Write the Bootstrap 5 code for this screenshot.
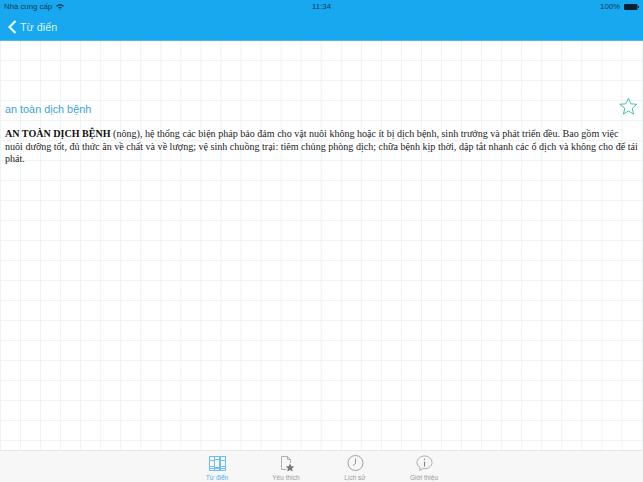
<!doctype html>
<html lang="vi">
<head>
<meta charset="utf-8">
<title>Từ điển</title>
<link href="https://cdn.jsdelivr.net/npm/bootstrap@5.3.0/dist/css/bootstrap.min.css" rel="stylesheet">
<style>
html,body{height:100%;margin:0}
body{width:643px;height:482px;overflow:hidden;font-family:"Liberation Sans",Arial,sans-serif;background:#fff}
.shell{height:482px}
.topbar{height:41px;background:#18a8ef;border-bottom:1px solid #4fb4e6;flex:none}
.statusrow{height:14px;padding:0 4px;font-size:7.8px;color:#0d3a55;line-height:14px}
.statusrow .clock{position:absolute;left:0;right:0;text-align:center;font-size:7.8px}
.navrow{height:26px;padding-left:8px;color:#d8f1fd;font-size:10.8px;gap:3px}
.sheet{flex:1 1 auto;background-color:#fff;
 background-image:linear-gradient(to right,#ebf3f4 1px,transparent 1px),linear-gradient(to bottom,#eff3f4 1px,transparent 1px);
 background-size:20.05px 20px;background-position:0 -1px;padding:0 5px;min-height:0}
.headrow{height:75px}
.term{color:#3aa3e0;font-size:10.85px;line-height:14px;margin:0;font-weight:400}
.defn{font-family:"Liberation Serif","Times New Roman",serif;font-size:10.07px;line-height:12.5px;color:#222;margin:12px 0 0;white-space:nowrap}
.defn b{color:#111}
.tabbar{height:32px;flex:none;background:#f7f7f8;border-top:1px solid #e8e8e8;gap:29px;padding-right:2px}
.tabitem{width:40px;color:#9a9a9a;font-size:6.5px;line-height:8px;padding-top:4px}
.tabitem.on{color:#4fb3e8}
.tabitem svg{display:block;height:18px;margin-bottom:1px}
</style>
</head>
<body>
<div class="shell d-flex flex-column">
  <header class="topbar position-relative">
    <div class="statusrow d-flex align-items-center justify-content-between">
      <span class="d-flex align-items-center gap-1">Nhà cung cấp
        <svg width="8" height="6" viewBox="0 0 8 6"><path d="M0 1.800C2.200-.3 5.800-.3 8 1.800L7 2.800C5.300 1.200 2.700 1.200 1 2.800ZM2 3.500C3.100 2.500 4.900 2.500 6 3.500L5 4.500C4.400 4 3.600 4 3 4.500ZM4 6L3.400 5.100C3.800 4.900 4.200 4.900 4.600 5.100Z" fill="#0d3a55"/></svg>
      </span>
      <span class="clock">11:34</span>
      <span class="d-flex align-items-center gap-1">100%
        <svg width="15" height="6" viewBox="0 0 15 6"><rect x="0" y="0" width="13.500" height="6" rx="1" fill="#0a2030"/><rect x="13.800" y="2" width="1.200" height="2" fill="#0a2030"/></svg>
      </span>
    </div>
    <div class="navrow d-flex align-items-center">
      <svg width="9" height="14" viewBox="0 0 9 14"><path d="M7.500 1L1.500 7l6 6" fill="none" stroke="#e4f5fe" stroke-width="2.200"/></svg>
      <span>Từ điển</span>
    </div>
  </header>
  <main class="sheet">
    <div class="headrow d-flex align-items-end justify-content-between">
      <h1 class="term">an toàn dịch bệnh</h1>
      <svg width="19" height="19" viewBox="0 0 19 19"><path d="M9.500 1.200l2.300 5.600 6 .5-4.600 3.900 1.400 5.900-5.100-3.200-5.100 3.200 1.400-5.900L.8 7.300l6-.5z" fill="none" stroke="#4cc3a4" stroke-width="1"/></svg>
    </div>
    <p class="defn"><b>AN TOÀN DỊCH BỆNH</b> (nông), hệ thống các biện pháp bảo đảm cho vật nuôi không hoặc ít bị dịch bệnh, sinh trưởng và phát triển đều. Bao gồm việc<br>nuôi dưỡng tốt, đủ thức ăn về chất và về lượng; vệ sinh chuồng trại: tiêm chủng phòng dịch; chữa bệnh kịp thời, dập tắt nhanh các ổ dịch và không cho để tái<br>phát.</p>
  </main>
  <nav class="tabbar d-flex justify-content-center">
    <div class="tabitem on d-flex flex-column align-items-center">
      <svg width="17" height="18" viewBox="0 0 17 18" fill="none" stroke="#6dbfed" stroke-width="1"><rect x=".5" y="1.500" width="5" height="14"/><rect x="5.500" y="1.500" width="5" height="14"/><rect x="11.500" y="1.500" width="5" height="14"/><path d="M.5 5.500h5M.5 11.500h5M5.500 4.500h5M5.500 12.500h5M11.500 5.500h5M11.500 11.500h5M.5 13.500h16"/></svg>
      <span>Từ điển</span>
    </div>
    <div class="tabitem d-flex flex-column align-items-center">
      <svg width="17" height="18" viewBox="0 0 17 18" fill="none"><path d="M3.500 1.500h6l3 3V8M3.500 1.500v13h5M9.500 1.500v3h3" stroke="#a0a0a0" stroke-width=".8"/><path d="M12 8.500l1.300 2.800 3 .3-2.300 2 .7 3-2.700-1.600-2.700 1.600.7-3-2.300-2 3-.3z" fill="#777"/></svg>
      <span>Yêu thích</span>
    </div>
    <div class="tabitem d-flex flex-column align-items-center">
      <svg width="17" height="18" viewBox="0 0 17 18" fill="none" stroke="#8a8a8a"><circle cx="8.500" cy="8" r="7.500" stroke-width=".8"/><path d="M8.500 3.500V8.500L6 10.500" stroke-width=".9"/></svg>
      <span>Lịch sử</span>
    </div>
    <div class="tabitem d-flex flex-column align-items-center">
      <svg width="17" height="18" viewBox="0 0 17 18" fill="none"><path d="M8.500 1C4.300 1 1 3.800 1 7.500c0 2.200 1.200 4 3 5.100L3.800 15.500l3-2c.5.100 1.100.2 1.700.2 4.200 0 7.500-2.800 7.500-6.200S12.700 1 8.500 1z" stroke="#9a9a9a" stroke-width=".8"/><path d="M8.500 6.500v5" stroke="#808080" stroke-width="1.100"/><circle cx="8.500" cy="4.300" r=".7" fill="#808080"/></svg>
      <span>Giới thiệu</span>
    </div>
  </nav>
</div>
<script src="https://cdn.jsdelivr.net/npm/bootstrap@5.3.0/dist/js/bootstrap.bundle.min.js"></script>
</body>
</html>
